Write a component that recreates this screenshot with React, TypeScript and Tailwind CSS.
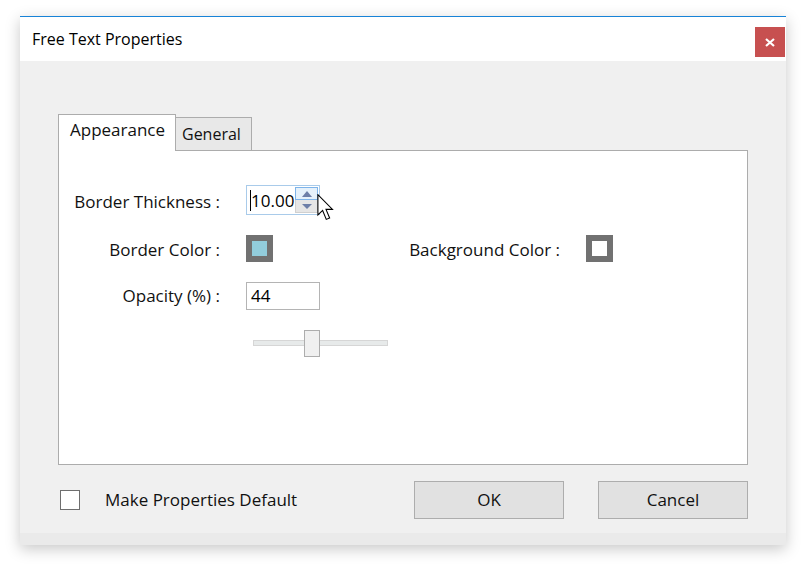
import React from 'react';

const font = { fontFamily: '"Open Sans", "Noto Sans", "Liberation Sans", sans-serif' };

const Swatch = ({ fill }: { fill: string }) => (
  <div className="w-[27px] h-[27px] border-[6px] border-[#717171]">
    <div className={`w-full h-full ${fill}`} />
  </div>
);

const App = () => {
  return (
    <div className="min-h-screen bg-white text-[#111]" style={font}>
      <div className="pl-[20px] pt-[16px]">
        <div className="w-[766px] h-[529px] flex flex-col bg-[#f0f0f0] shadow-[0_4px_14px_rgba(0,0,0,0.22)]">
          {/* Title bar */}
          <div className="h-[45px] border-t border-[#1883d7] bg-white flex items-start">
            <span className="pl-[12px] pt-[11px] text-[16px] leading-[22px] text-black">Free Text Properties</span>
            <button className="ml-auto mr-[1px] mt-[10px] w-[30px] h-[30px] bg-[#c75050] flex items-center justify-center">
              <svg width="10" height="9" viewBox="0 0 10 9">
                <path d="M1 1 L9 8 M9 1 L1 8" stroke="white" strokeWidth="2.2" />
              </svg>
            </button>
          </div>

          {/* Body */}
          <div className="flex-1 flex flex-col px-[38px] pt-[53px]">
            {/* Tabs */}
            <div className="flex items-end h-[36px]">
              <div className="relative z-10 -mb-px w-[118px] h-[37px] bg-white border border-b-0 border-[#acacac] pl-[11px] pt-[4px] text-[17px] leading-[22px]">
                Appearance
              </div>
              <div className="w-[76px] h-[33px] bg-[#e8e8e8] border border-l-0 border-b-0 border-[#acacac] pl-[6px] pt-[5px] text-[16px] leading-[22px]">
                General
              </div>
            </div>

            {/* Panel */}
            <div className="w-[690px] h-[315px] bg-white border border-[#acacac] pt-[34px] flex flex-col gap-[20px] text-[17px]">
              {/* Border Thickness */}
              <div className="flex items-center h-[30px]">
                <span className="w-[161px] text-right pt-[4px]">Border Thickness :</span>
                <div className="relative ml-[26px] w-[74px] h-[30px] border border-[#a9cbea] flex items-center">
                  <span className="ml-[3px] w-px h-[21px] bg-black" />
                  <span className="text-[17px] leading-none text-black">10.00</span>
                  <div className="ml-auto mr-px flex flex-col w-[23px] h-[26px]">
                    <div className="h-[13px] bg-[#e5f1fb] border border-[#7eb4ea] flex items-center justify-center">
                      <svg width="10" height="6" viewBox="0 0 10 6"><path d="M0 6 L5 0 L10 6 Z" fill="#6d7fa8" /></svg>
                    </div>
                    <div className="h-[13px] bg-[#e6e6e6] border border-t-0 border-[#d0d0d0] flex items-center justify-center">
                      <svg width="10" height="5" viewBox="0 0 10 5"><path d="M0 0 L10 0 L5 5 Z" fill="#6d7fa8" /></svg>
                    </div>
                  </div>
                  {/* mouse pointer */}
                  <svg className="absolute left-[70px] top-[8px]" width="18" height="27" viewBox="0 0 13 20">
                    <path d="M0.5 0.5 L0.5 15.5 L4 12.2 L6.7 18.8 L9.2 17.8 L6.5 11.4 L11.3 11.4 Z" fill="white" stroke="black" strokeWidth="0.8" strokeLinejoin="miter" />
                  </svg>
                </div>
              </div>

              {/* Colors */}
              <div className="flex items-center h-[27px]">
                <span className="w-[161px] text-right pt-[2px]">Border Color :</span>
                <div className="ml-[26px]">
                  <Swatch fill="bg-[#92cddc]" />
                </div>
                <span className="w-[287px] text-right pt-[2px]">Background Color :</span>
                <div className="ml-[26px]">
                  <Swatch fill="bg-white" />
                </div>
              </div>

              {/* Opacity */}
              <div className="flex items-center h-[28px]">
                <span className="w-[161px] text-right">Opacity (%) :</span>
                <div className="ml-[26px] w-[74px] h-[28px] border border-[#b4b4b4] flex items-center pl-[4px] text-[17px] text-black">
                  44
                </div>
              </div>

              {/* Slider */}
              <div className="flex">
                <div className="relative ml-[194px] w-[135px] h-[27px]">
                  <div className="absolute left-0 right-0 top-[10px] h-[6px] bg-[#e7eaea] border border-[#d6d6d6]" />
                  <div className="absolute left-[51px] top-0 w-[16px] h-[27px] bg-[#f0f0f0] border-[1.5px] border-[#adadad]" />
                </div>
              </div>
            </div>

            {/* Footer */}
            <div className="flex items-center mt-[16px] h-[38px]">
              <div className="ml-[2px] w-[20px] h-[20px] bg-white border border-[#6e6e6e]" />
              <span className="ml-[25px] text-[17px]">Make Properties Default</span>
              <button className="ml-auto w-[150px] h-[38px] bg-[#e1e1e1] border border-[#adadad] text-[17px]">OK</button>
              <button className="ml-[34px] w-[150px] h-[38px] bg-[#e1e1e1] border border-[#adadad] text-[17px]">Cancel</button>
            </div>
          </div>
          <div className="h-[12px] bg-[#eaeaea]" />
        </div>
      </div>
    </div>
  );
};

export default App;
